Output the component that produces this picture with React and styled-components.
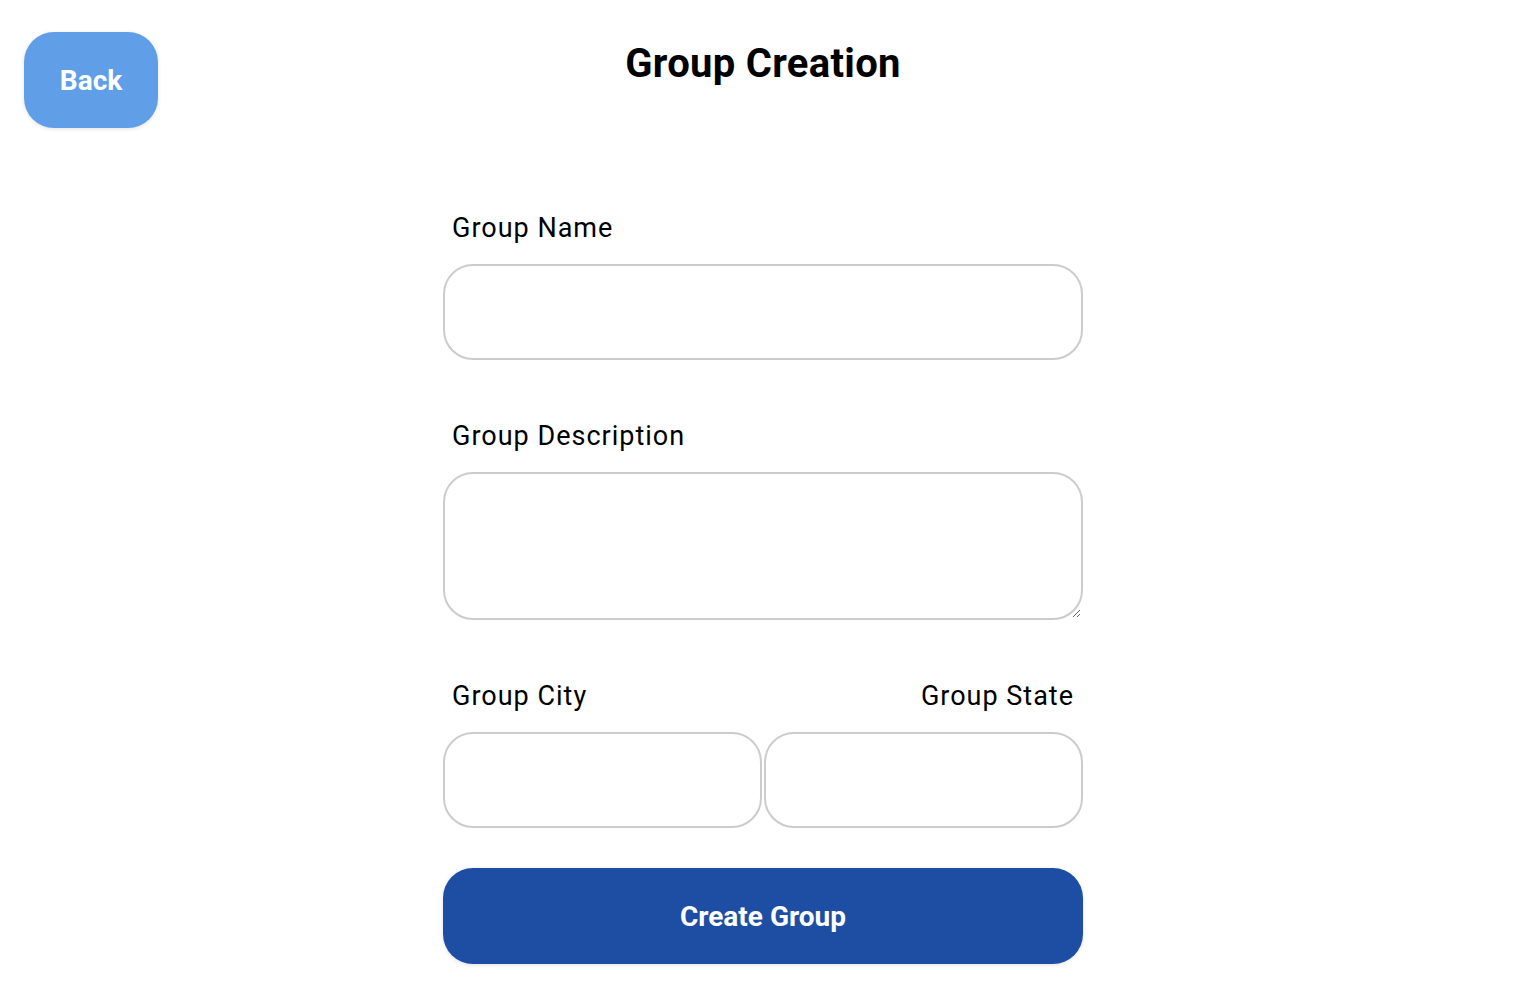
import React from "react";
import styled, { createGlobalStyle } from "styled-components";

const Global = createGlobalStyle`
  html, body { margin: 0; padding: 0; background: #ffffff; }
  body { font-family: Roboto, "Noto Sans", Arial, sans-serif; color: #000; }
  * { box-sizing: border-box; }
`;

const Page = styled.div`
  padding: 32px 32px 32px 24px;
  display: flex;
  flex-direction: column;
`;

const Header = styled.header`
  display: grid;
  grid-template-columns: 134px 1fr 134px;
  align-items: start;
`;

const BackButton = styled.button`
  width: 134px;
  height: 96px;
  border: none;
  border-radius: 30px;
  background: #609fe8;
  color: #ffffff;
  font-family: Roboto, Arial, sans-serif;
  font-weight: 700;
  font-size: 28px;
  box-shadow: 0 1px 4px rgba(0, 0, 0, 0.12);
  cursor: pointer;
`;

const Title = styled.h1`
  margin: 10px 0 0;
  text-align: center;
  font-size: 40px;
  font-weight: 700;
  line-height: 44px;
  letter-spacing: 0.3px;
`;

const Form = styled.form`
  width: 640px;
  margin: 85px auto 0;
  display: flex;
  flex-direction: column;
`;

const Field = styled.div`
  display: flex;
  flex-direction: column;
  margin-bottom: ${(p) => p.$gap}px;
`;

const LabelRow = styled.div`
  display: flex;
  justify-content: space-between;
  padding: 0 9px;
  margin-bottom: 21px;
`;

const Label = styled.label`
  font-size: 27px;
  line-height: 30px;
  font-weight: 400;
  letter-spacing: 1px;
`;

const inputStyles = `
  width: 100%;
  border: 2px solid #cccccc;
  border-radius: 30px;
  background: #ffffff;
  font-family: Roboto, Arial, sans-serif;
  font-size: 22px;
  padding: 0 24px;
  outline: none;
`;

const TextInput = styled.input`
  ${inputStyles}
  height: 96px;
`;

const TextArea = styled.textarea`
  ${inputStyles}
  height: 148px;
  padding: 20px 24px;
  display: block;
`;

const SplitInputs = styled.div`
  display: grid;
  grid-template-columns: 1fr 1fr;
  gap: 2px;
`;

const SubmitButton = styled.button`
  height: 96px;
  width: 100%;
  border: none;
  border-radius: 30px;
  background: #1d4ea3;
  color: #ffffff;
  font-family: Roboto, Arial, sans-serif;
  font-weight: 700;
  font-size: 28px;
  box-shadow: 0 1px 4px rgba(0, 0, 0, 0.12);
  cursor: pointer;
`;

export default function App() {
  return (
    <>
      <Global />
      <Page>
        <Header>
          <BackButton type="button">Back</BackButton>
          <Title>Group Creation</Title>
          <div />
        </Header>
        <Form onSubmit={(e) => e.preventDefault()}>
          <Field $gap={61}>
            <LabelRow>
              <Label htmlFor="gname">Group Name</Label>
            </LabelRow>
            <TextInput id="gname" type="text" />
          </Field>
          <Field $gap={61}>
            <LabelRow>
              <Label htmlFor="gdesc">Group Description</Label>
            </LabelRow>
            <TextArea id="gdesc" />
          </Field>
          <Field $gap={40}>
            <LabelRow>
              <Label htmlFor="gcity">Group City</Label>
              <Label htmlFor="gstate">Group State</Label>
            </LabelRow>
            <SplitInputs>
              <TextInput id="gcity" type="text" />
              <TextInput id="gstate" type="text" />
            </SplitInputs>
          </Field>
          <SubmitButton type="submit">Create Group</SubmitButton>
        </Form>
      </Page>
    </>
  );
}
